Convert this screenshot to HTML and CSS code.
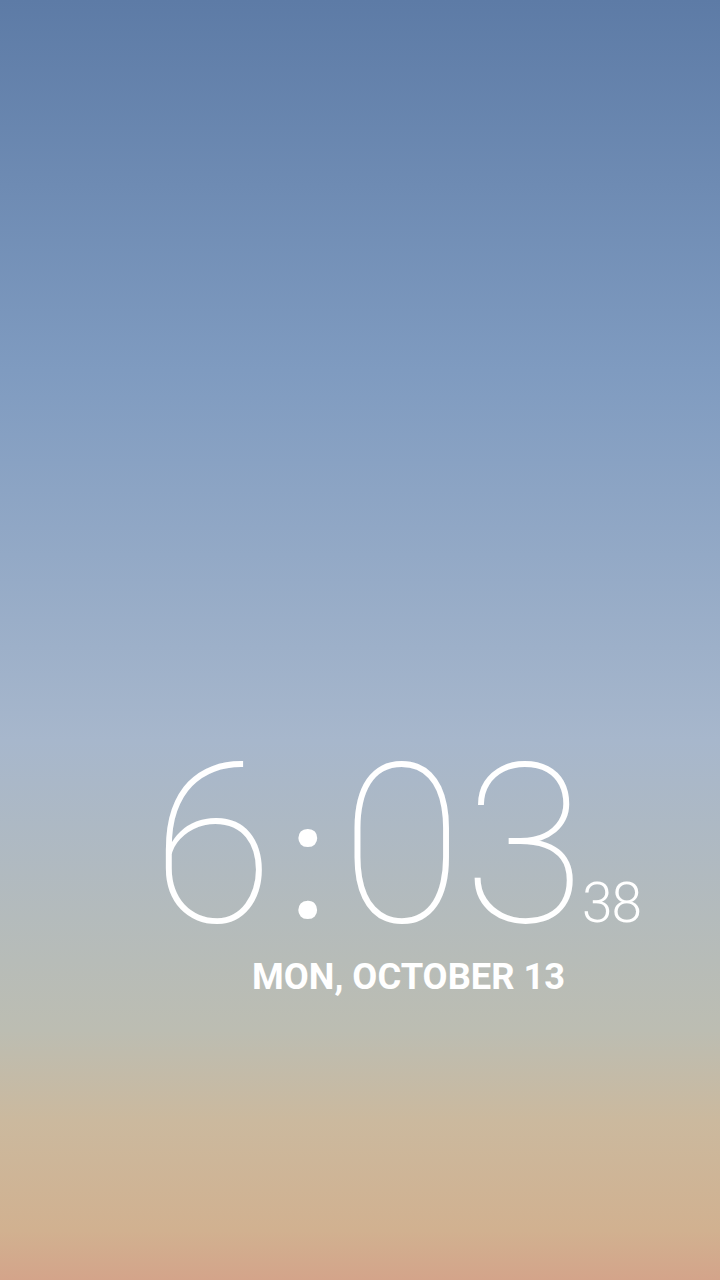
FILE: index.html
```html
<!DOCTYPE html>
<html>
<head>
<meta charset="utf-8">
<link rel="stylesheet" href="styles.css">
</head>
<body>
<main class="screen">
  <div class="clock">
    <span class="time">6<span class="colon">:</span>03</span><span class="secs">38</span>
  </div>
  <div class="date">MON, OCTOBER 13</div>
</main>
</body>
</html>
```
FILE: styles.css
```css
html, body {
  margin: 0;
  padding: 0;
}
.screen {
  width: 720px;
  height: 1280px;
  box-sizing: border-box;
  padding-top: 762.75px;
  display: flex;
  flex-direction: column;
  align-items: flex-start;
  background: linear-gradient(to bottom,
    #5d7ba6 0px,
    #7f9bc0 370px,
    #a7b7cc 740px,
    #b7bcb8 960px,
    #bcbdb2 1030px,
    #cbb99e 1120px,
    #d1b190 1230px,
    #d4a48a 1280px);
  font-family: Roboto, "Noto Sans", sans-serif;
  color: #fff;
}
.clock {
  display: flex;
  align-items: baseline;
  margin-left: 152px;
}
.time {
  font-size: 222px;
  line-height: 0.75;
  font-weight: 100;
  letter-spacing: 1px;
}
.colon {
  font-size: 167px;
  font-weight: 400;
  letter-spacing: 0;
  vertical-align: 4px;
  margin: 0 13px 0 13px;
}
.secs {
  font-size: 55px;
  line-height: 1;
  font-weight: 300;
  letter-spacing: -1px;
  margin-left: -4px;
}
.date {
  margin-top: 25.5px;
  margin-left: 252px;
  font-size: 36.3px;
  line-height: 1.17;
  font-weight: 700;
}
```
